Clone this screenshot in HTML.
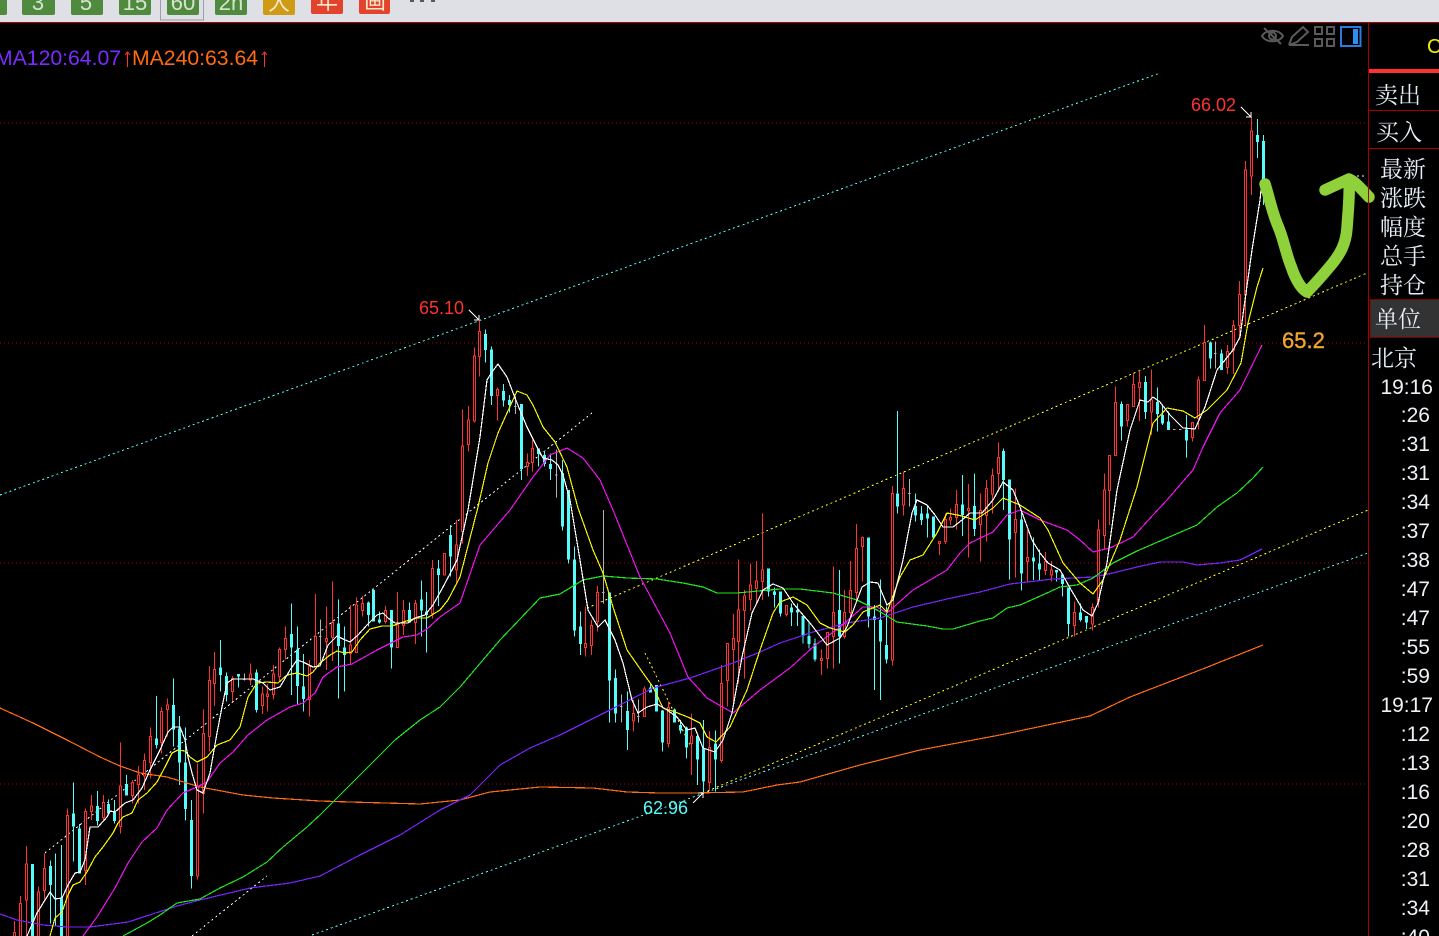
<!DOCTYPE html>
<html><head><meta charset="utf-8"><style>
html,body{margin:0;padding:0;background:#000;width:1439px;height:936px;overflow:hidden}
svg{display:block}
.w{fill:none;stroke-width:3}
.rw{stroke:#ff3232}
.rb{stroke:#ff3232;fill:#000}
.cw{stroke:#54fcfc}
.cb{stroke:#54fcfc;stroke-width:9;fill:none}
.gy{stroke:#b4b4b4;fill:none;stroke-width:3}
.ma{fill:none;stroke-width:1.2;shape-rendering:crispEdges}
.dot{fill:none;stroke-width:1;shape-rendering:crispEdges}
.t{font-family:"Liberation Sans",sans-serif}
.cn{font-family:"Liberation Serif","Noto Serif CJK SC",serif;font-size:23px;fill:#e6eef8;letter-spacing:0}
.tm{font-family:"Liberation Sans",sans-serif;font-size:21px;fill:#eef2f6;text-anchor:end}
</style></head><body>
<svg width="1439" height="936" viewBox="0 0 1439 936" xmlns="http://www.w3.org/2000/svg">
<rect width="1439" height="936" fill="#000"/>
<!-- toolbar -->
<rect width="1439" height="22" fill="#dfe0e5"/>
<rect y="22" width="1439" height="1" fill="#a80000"/>
<g fill="#4f8a3e">
<rect x="-6" y="-6" width="13" height="21" rx="2"/>
<rect x="22" y="-6" width="33" height="21" rx="2"/>
<rect x="71" y="-6" width="32" height="21" rx="2"/>
<rect x="119" y="-6" width="32" height="21" rx="2"/>
<rect x="167" y="-6" width="32" height="21" rx="2"/>
<rect x="215" y="-6" width="32" height="21" rx="2"/>
</g>
<rect x="160.500" y="-3" width="43" height="23" fill="none" stroke="#9aa0a8"/>
<rect x="263" y="-6" width="32" height="21" rx="2" fill="#cf9a14"/>
<rect x="311" y="-6" width="32" height="20" rx="2" fill="#e3432c"/>
<rect x="359" y="-6" width="31" height="20" rx="2" fill="#e3432c"/>
<g class="t" font-size="22" fill="#d6e4cf" text-anchor="middle">
<text x="38" y="10">3</text><text x="86" y="10">5</text><text x="135" y="10">15</text><text x="183" y="10">60</text><text x="231" y="10">2h</text>
</g>
<g font-family="'Liberation Sans','Noto Sans CJK SC',sans-serif" font-size="22" fill="#f6e8c8" text-anchor="middle">
<text x="279" y="10">大</text><text x="327" y="9">年</text><text x="375" y="9">画</text>
</g>
<g fill="#555a60"><rect x="410" y="0" width="4" height="2"/><rect x="420" y="0" width="4" height="2"/><rect x="431" y="0" width="4" height="2"/></g>

<!-- horizontal grid -->
<g class="dot" stroke="#b00000" stroke-dasharray="1 3">
<path d="M0 123H1368M0 343H1368M0 563H1368M0 784H1368"/>
</g>
<!-- channels -->
<g class="dot" stroke-dasharray="2 3">
<path stroke="#54fcfc" d="M0 495L1160 73"/>
<path stroke="#54fcfc" d="M312 935L1368 553"/>
<path stroke="#ffff00" d="M587 608L1367 273"/>
<path stroke="#ffff00" d="M703 793L1368 510"/>
<path stroke="#ffff00" d="M645 653L690 745"/>
<path stroke="#fff" d="M45 853L592 413"/>
<path stroke="#fff" d="M192 936L267 876"/>
<path stroke="#fff" d="M1357 176H1367"/>
</g>

<!-- candles -->
<g shape-rendering="crispEdges">
<g transform="translate(0,640) scale(.33333)">
<path class="w rw" d="M43 843V940M61 768V940M79 618V940M115 740V940M133 640V780M203 505V940M257 505V735M275 465V540M311 465V540M361 307V580M397 420V490M415 378V490M433 340V450M451 262V415M485 202V340M503 175V290M593 370V718M611 208V520M629 78V335M643 36V198M697 108V185M751 70V135M787 140V222M802 132V215M820 75V178M838 22V125M856 -40V58M928 60V230M946 -138V80"/>
<path class="w rb" d="M40 878h6V945h-6zM58 790h6V945h-6zM76 672h6V780h-6zM112 756h6V945h-6zM130 685h6V752h-6zM200 527h6V945h-6zM254 515h6V692h-6zM272 498h6V515h-6zM308 488h6V533h-6zM358 438h6V560h-6zM394 428h6V467h-6zM412 405h6V433h-6zM430 362h6V408h-6zM448 290h6V368h-6zM482 214h6V308h-6zM500 195h6V208h-6zM590 438h6V708h-6zM608 280h6V460h-6zM626 121h6V290h-6zM640 88h6V130h-6zM694 115h6V155h-6zM748 102h6V120h-6zM784 162h6V197h-6zM799 162h6V170h-6zM817 102h6V163h-6zM835 28h6V110h-6zM853 -5h6V28h-6zM925 80h6V178h-6zM943 -10h6V80h-6z"/>
<path class="w cw" d="M97 672V940M151 662V850M167 640V860M185 615V940M221 427V665M239 552V700M293 453V557M325 478V520M343 480V550M379 405V467M469 168V325M521 115V320M539 228V435M557 262V542M575 480V745M661 0V155M679 98V185M715 102V143M769 88V218M874 -110V165M892 -40V195M910 42V215"/>
<path class="cb" d="M97 672V940M151 678V735M185 775V940M221 520V560M239 565V700M293 498V543M325 492V520M343 515V543M379 432V467M469 295V315M521 195V268M539 265V368M557 367V507M575 540V708M661 82V105M679 108V165M715 102V110M769 97V210M874 -18V23M892 28V138M910 140V177"/>
<path class="gy" d="M733 100V122M729 118h8"/>
</g>
<g transform="translate(200,560) scale(.33333)">
<path class="w rw" d="M379 140V330M397 64V303M451 135V315M469 112V278M487 108V170M556 138V190M592 96V262M610 120V225M646 120V252M697 0V175M733 -20V45"/>
<path class="w rb" d="M376 235h6V245h-6zM394 188h6V232h-6zM448 255h6V280h-6zM466 135h6V278h-6zM484 130h6V152h-6zM553 152h6V185h-6zM589 195h6V262h-6zM607 152h6V197h-6zM643 130h6V188h-6zM694 25h6V160h-6zM730 -20h6V45h-6z"/>
<path class="w cw" d="M415 118V415M433 200V395M505 125V200M520 88V185M538 155V190M574 150V325M628 128V188M664 62V230M680 96V278M715 0V138"/>
<path class="cb" d="M415 190V258M433 262V285M505 128V165M520 90V185M538 178V187M574 150V262M628 150V188M664 118V152M680 155V165M715 25V45"/>
<path class="gy" d="M361 178V305M357 230h8"/>
</g>
<g transform="translate(400,290) scale(.33333)">
<path class="w rw" d="M169 690V880M187 358V760M205 348V485M223 172V398M238 90V260M292 292V392M382 490V558M397 450V545"/>
<path class="w rb" d="M166 765h6V840h-6zM184 468h6V725h-6zM202 390h6V464h-6zM220 198h6V393h-6zM235 124h6V200h-6zM289 298h6V317h-6zM379 517h6V530h-6zM394 475h6V518h-6z"/>
<path class="w cw" d="M151 705V860M256 118V218M274 170V345M310 282V350M328 315V368M364 342V570M415 475V530M433 483V530M451 490V570"/>
<path class="cb" d="M151 735V800M256 132V180M274 178V318M310 303V332M328 330V345M364 342V537M415 475V492M433 495V522M451 522V537"/>
<path class="gy" d="M346 320V372M342 350h8M469 478V622M465 555h8"/>
</g>
<g transform="translate(560,500) scale(.33333)">
<path class="w rw" d="M76 320V470M94 360V465M112 258V395M220 600V695M253 560V650M325 605V743M394 640V825M448 693V872M484 495V788M502 430V620M520 342V620M535 178V550M553 270V535M571 190V332M589 183V310M607 40V300M679 315V350"/>
<path class="w rb" d="M73 430h6V443h-6zM91 376h6V437h-6zM109 277h6V365h-6zM217 640h6V663h-6zM250 567h6V650h-6zM322 622h6V730h-6zM391 708h6V730h-6zM445 742h6V848h-6zM481 550h6V782h-6zM499 430h6V542h-6zM517 415h6V448h-6zM532 330h6V425h-6zM550 288h6V332h-6zM568 255h6V298h-6zM586 243h6V266h-6zM604 210h6V245h-6zM676 317h6V343h-6z"/>
<path class="w cw" d="M7 -120V92M25 -30V190M43 140V410M61 335V465M148 277V668M166 508V668M202 575V750M271 550V578M289 555V635M307 630V755M343 625V668M361 660V700M379 680V776M412 700V855M430 660V880M466 692V875M625 205V290M643 262V322M661 275V350M694 310V378M712 310V378"/>
<path class="cb" d="M7 -81V80M25 -30V178M43 178V392M61 380V432M148 277V542M166 534V640M202 633V690M271 562V578M289 555V635M307 632V728M343 628V668M361 675V692M379 682V742M412 708V778M430 745V845M466 730V778M625 205V275M643 275V285M661 275V340M694 322V338M712 330V338"/>
<path class="gy" d="M130 30V310M126 278h8M184 583V668M180 620h8M235 598V668M231 650h8"/>
</g>
<g transform="translate(780,400) scale(.33333)">
<path class="w rw" d="M124 748V825M142 697V805M160 500V805M193 570V715M211 483V650M229 372V600M247 410V545M337 258V797M370 215V347M478 425V465M496 340V432M511 325V375M529 270V388M565 252V473M601 280V485M619 240V425M637 205V340M655 127V270M706 265V533"/>
<path class="w rb" d="M121 775h6V781h-6zM139 697h6V775h-6zM157 637h6V710h-6zM190 638h6V710h-6zM208 572h6V638h-6zM226 445h6V578h-6zM244 412h6V440h-6zM334 280h6V780h-6zM367 265h6V315h-6zM475 425h6V431h-6zM493 358h6V425h-6zM508 352h6V360h-6zM526 313h6V352h-6zM562 325h6V332h-6zM598 332h6V373h-6zM616 265h6V347h-6zM634 227h6V282h-6zM652 172h6V220h-6zM703 358h6V398h-6z"/>
<path class="w cw" d="M69 645V730M87 665V745M105 715V785M178 510V790M265 412V683M283 615V870M301 538V900M319 620V790M352 33V340M406 280V365M424 318V375M442 318V413M460 350V415M547 225V408M583 220V408M670 145V330M688 240V538"/>
<path class="cb" d="M69 648V708M87 708V732M105 730V778M178 630V710M265 412V650M283 650V660M301 660V725M319 735V778M352 280V320M406 318V347M424 340V360M442 340V355M460 350V413M547 313V345M583 318V387M670 153V240M688 238V418"/>
<path class="gy" d="M388 237V320M384 280h8"/>
</g>
<g transform="translate(1020,340) scale(.33333)">
<path class="w rw" d="M22 570V725M76 636V705M94 663V725M163 785V890M217 790V872M235 538V802M253 400V628M268 345V555M286 140V347M322 192V260M340 100V200M358 93V243M394 88V285M517 248V305"/>
<path class="w rb" d="M19 652h6V665h-6zM73 665h6V692h-6zM91 690h6V705h-6zM160 818h6V857h-6zM214 802h6V852h-6zM232 570h6V785h-6zM250 450h6V587h-6zM265 346h6V452h-6zM283 187h6V347h-6zM319 193h6V242h-6zM337 133h6V200h-6zM355 127h6V143h-6zM391 180h6V216h-6zM514 248h6V292h-6z"/>
<path class="w cw" d="M4 510V752M40 592V720M58 628V722M109 690V725M127 700V770M145 743V890M181 790V845M199 828V867M304 185V302M376 108V237M412 142V275M427 195V255M445 215V270M499 225V353"/>
<path class="cb" d="M4 538V700M40 652V665M58 670V688M109 690V698M127 703V732M145 743V852M181 817V840M199 828V848M304 192V260M376 126V216M412 186V222M427 225V250M445 245V270M499 268V302"/>
<path class="gy" d="M459 268h8M477 268h8"/>
</g>
<g transform="translate(1180,200) scale(.33333)">
<path class="w rw" d="M55 530V688M73 375V542M142 435V522M160 360V522M178 243V420M196 -117V375M214 -249V-15"/>
<path class="w rb" d="M52 540h6V655h-6zM70 427h6V542h-6zM139 455h6V502h-6zM157 377h6V450h-6zM175 283h6V377h-6zM193 -90h6V285h-6zM211 -207h6V-72h-6z"/>
<path class="w cw" d="M91 425V505M124 448V510M232 -243V-126M250 -195V15"/>
<path class="cb" d="M91 427V475M124 460V510M232 -195V-174M250 -177V-45"/>
<path class="gy" d="M106 425V505M102 460h8"/>
</g>
</g>

<!-- moving averages -->
<polyline class="ma" stroke="#ff6a14" points="0,708 33,723 67,740 100,757 120,766 140,773 167,777 200,787 243,795 273,798 320,801 350,802 420,804 460,800 490,792 540,787 593,788 627,792 660,793 693,793 743,792 777,785 800,782 860,765 920,750 1000,735 1090,716 1130,697 1200,670 1263,645"/>
<polyline class="ma" stroke="#7a22ff" points="0,914 17,920 43,925 67,927 90,927 128,922 177,906 200,900 250,888 290,883 320,876 360,855 400,835 440,810 470,795 500,765 530,748 560,735 610,710 653,688 690,678 733,663 760,652 780,643 813,632 847,623 880,618 913,607 947,599 980,592 1010,584 1053,579 1093,577 1113,573 1137,567 1160,562 1183,562 1197,565 1220,563 1240,560 1262,549"/>
<polyline class="ma" stroke="#1fe61f" points="123,936 147,923 160,915 177,903 200,899 220,888 243,877 267,862 283,847 307,827 320,815 395,740 420,720 440,707 460,687 500,640 540,598 560,594 583,580 603,576 627,578 657,579 683,583 703,587 717,593 737,593 780,589 800,589 833,593 857,600 877,610 897,622 927,626 943,629 953,629 980,621 993,618 1007,608 1020,605 1047,593 1060,587 1077,585 1093,578 1113,563 1137,551 1167,538 1197,525 1217,507 1237,493 1253,478 1263,467"/>
<polyline class="ma" stroke="#f010f0" points="83,936 97,917 115,888 128,863 142,842 157,828 167,810 183,793 197,787 207,782 220,763 233,752 248,735 267,720 290,707 303,703 315,693 323,677 337,667 352,664 377,650 403,637 417,635 427,629 440,617 460,603 480,545 510,510 533,477 550,455 567,448 583,458 600,480 613,510 640,577 670,633 688,677 707,698 733,713 760,690 790,668 813,647 840,627 863,607 877,607 887,613 913,590 947,570 960,553 970,543 993,532 1007,515 1020,510 1040,520 1067,530 1080,540 1093,552 1110,548 1133,537 1153,515 1167,500 1193,470 1203,447 1220,413 1240,390 1262,345"/>
<polyline class="ma" stroke="#f4f400" points="50,936 55,918 62,912 68,895 73,885 80,882 87,872 95,857 103,847 113,833 118,823 123,817 132,813 138,800 147,793 157,782 165,767 172,753 178,750 185,751 190,757 197,762 207,757 217,745 230,740 240,727 248,697 257,683 267,682 278,683 287,675 297,673 307,676 313,672 320,663 330,655 337,651 345,653 352,652 360,640 370,629 382,626 392,626 403,622 417,618 427,618 440,610 448,600 460,577 478,507 488,463 498,433 507,413 517,391 527,395 533,405 543,427 555,442 567,467 578,508 593,550 603,573 613,607 627,650 643,673 653,687 663,708 675,712 690,718 700,723 707,737 716,742 730,727 747,690 760,650 773,613 780,602 793,597 807,605 820,623 830,628 845,632 853,625 863,612 880,605 887,612 900,577 910,560 923,555 937,533 947,513 962,516 975,520 993,508 1003,498 1020,505 1040,518 1048,530 1063,563 1080,583 1093,594 1103,580 1120,540 1137,487 1153,423 1167,408 1183,411 1195,418 1207,410 1227,390 1241,363 1248,323 1257,287 1263,268"/>
<polyline class="ma" stroke="#ffffff" points="27,936 37,913 50,892 55,899 62,898 68,885 75,873 80,872 85,860 90,827 98,827 107,817 110,811 115,812 125,803 133,800 142,788 150,770 160,750 168,732 173,727 180,727 185,740 188,757 192,773 197,790 203,793 210,773 217,733 222,707 227,683 233,679 253,679 263,683 270,690 280,687 290,670 297,660 303,662 313,667 320,666 328,645 337,636 343,639 350,642 358,635 367,625 377,615 383,613 388,618 395,623 408,623 415,618 425,615 433,605 443,587 452,570 457,560 468,510 480,437 487,380 492,372 498,364 507,377 517,403 527,427 537,447 543,458 552,460 558,465 563,475 570,500 580,560 588,610 598,627 605,620 615,640 623,663 632,700 638,713 647,707 657,704 667,710 677,717 687,730 695,728 703,748 715,752 723,740 732,713 742,657 752,613 763,590 773,584 783,588 793,603 797,608 810,623 827,645 840,638 847,627 862,587 870,582 878,583 887,605 893,600 903,560 912,513 917,500 927,505 935,515 943,527 953,527 962,520 970,513 982,513 993,500 1003,482 1013,490 1020,507 1032,540 1040,553 1048,563 1060,570 1070,588 1083,610 1092,616 1098,603 1107,563 1117,490 1130,430 1140,400 1148,402 1153,397 1160,402 1170,415 1183,428 1195,429 1205,407 1217,370 1233,350 1240,337 1245,300 1252,250 1260,200 1262,180"/>

<!-- hand drawn -->
<path fill="none" stroke="#8fd13a" stroke-width="11.5" stroke-linecap="round" stroke-linejoin="round" d="M1265 184C1270 200 1272 212 1278 226C1284 240 1286 254 1291 266C1295 278 1300 288 1307 292C1313 286 1322 276 1332 264C1340 254 1346 244 1347 228C1348 212 1350 196 1349 180M1325 190L1349 179C1356 182 1362 190 1369 197"/>

<!-- price labels -->
<g class="t" font-size="18">
<text x="1191" y="111" fill="#ff3232">66.02</text>
<text x="419" y="314" fill="#ff3232">65.10</text>
<text x="643" y="814" fill="#54fcfc">62.96</text>
</g>
<g stroke="#fff" fill="none" stroke-width="1" shape-rendering="crispEdges">
<path d="M1241 107L1251 117M1251 112V117H1246"/>
<path d="M469 310L479 320M479 315V320H474"/>
<path d="M693 803L703 793M698 793H703V798"/>
</g>
<text class="t" x="1282" y="348" font-size="22" fill="#eda52e" stroke="#eda52e" stroke-width=".4">65.2</text>
<text class="t" x="-5" y="65" font-size="21.200" fill="#7a2bff">MA120:64.07</text>
<text class="t" x="132" y="65" font-size="21.200" fill="#ff6a14">MA240:63.64</text>
<g stroke="#ff3232" fill="none" shape-rendering="crispEdges">
<path d="M127.500 52V67M125 55L127.500 52L130 55"/>
<path d="M264.500 52V67M262 55L264.500 52L267 55"/>
</g>

<!-- top right icons -->
<g fill="none" stroke="#5a5a5a" stroke-width="2">
<path d="M1262 36C1266 29 1279 29 1283 36C1279 43 1266 43 1262 36Z"/>
<circle cx="1272.500" cy="36" r="3.500"/>
<path d="M1264 28L1281 44"/>
<path d="M1289 45L1292 37L1303 27L1308 32L1297 42L1289 45H1309"/>
<path d="M1315 27h7v7h-7zM1327 27h7v7h-7zM1315 39h7v7h-7zM1327 39h7v7h-7z"/>
</g>
<rect x="1341" y="27" width="19.500" height="19" fill="none" stroke="#2a7ddf" stroke-width="2"/>
<rect x="1353" y="29" width="5" height="15" fill="#2f8cf0"/>

<!-- right panel -->
<rect x="1368" y="23" width="1" height="913" fill="#a80000"/>
<text class="t" x="1427" y="53" font-size="20" fill="#f0f000">C</text>
<rect x="1369" y="69" width="70" height="4" fill="#ff3232"/>
<rect x="1369" y="110" width="70" height="1" fill="#a80000"/>
<rect x="1369" y="148" width="70" height="1" fill="#a80000"/>
<rect x="1370" y="299.500" width="70" height="38" fill="#333" stroke="#7a0000"/>
<text class="cn" x="1375" y="103">卖出</text>
<text class="cn" x="1376" y="140">买入</text>
<text class="cn" x="1380" y="177">最新</text>
<text class="cn" x="1380" y="206">涨跌</text>
<text class="cn" x="1380" y="235">幅度</text>
<text class="cn" x="1380" y="264">总手</text>
<text class="cn" x="1380" y="293">持仓</text>
<text class="cn" x="1375" y="327">单位</text>
<text class="cn" x="1371" y="366">北京</text>
<text class="tm" x="1433" y="394">19:16</text>
<text class="tm" x="1430" y="422">:26</text>
<text class="tm" x="1430" y="451">:31</text>
<text class="tm" x="1430" y="480">:31</text>
<text class="tm" x="1430" y="509">:34</text>
<text class="tm" x="1430" y="538">:37</text>
<text class="tm" x="1430" y="567">:38</text>
<text class="tm" x="1430" y="596">:47</text>
<text class="tm" x="1430" y="625">:47</text>
<text class="tm" x="1430" y="654">:55</text>
<text class="tm" x="1430" y="683">:59</text>
<text class="tm" x="1433" y="712">19:17</text>
<text class="tm" x="1430" y="741">:12</text>
<text class="tm" x="1430" y="770">:13</text>
<text class="tm" x="1430" y="799">:16</text>
<text class="tm" x="1430" y="828">:20</text>
<text class="tm" x="1430" y="857">:28</text>
<text class="tm" x="1430" y="886">:31</text>
<text class="tm" x="1430" y="915">:34</text>
<text class="tm" x="1430" y="944">:40</text>
</svg>
</body></html>
